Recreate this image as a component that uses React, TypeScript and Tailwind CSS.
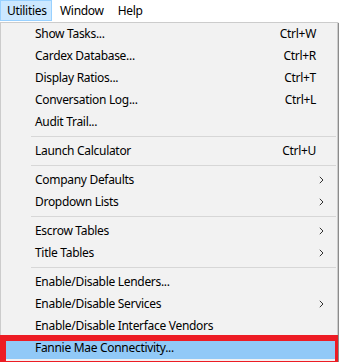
import React from "react";

type Item =
  | { kind: "item"; label: string; shortcut?: string; sub?: boolean; active?: boolean }
  | { kind: "sep" };

const items: Item[] = [
  { kind: "item", label: "Show Tasks...", shortcut: "Ctrl+W" },
  { kind: "item", label: "Cardex Database...", shortcut: "Ctrl+R" },
  { kind: "item", label: "Display Ratios...", shortcut: "Ctrl+T" },
  { kind: "item", label: "Conversation Log...", shortcut: "Ctrl+L" },
  { kind: "item", label: "Audit Trail..." },
  { kind: "sep" },
  { kind: "item", label: "Launch Calculator", shortcut: "Ctrl+U" },
  { kind: "sep" },
  { kind: "item", label: "Company Defaults", sub: true },
  { kind: "item", label: "Dropdown Lists", sub: true },
  { kind: "sep" },
  { kind: "item", label: "Escrow Tables", sub: true },
  { kind: "item", label: "Title Tables", sub: true },
  { kind: "sep" },
  { kind: "item", label: "Enable/Disable Lenders..." },
  { kind: "item", label: "Enable/Disable Services", sub: true },
  { kind: "item", label: "Enable/Disable Interface Vendors" },
  { kind: "item", label: "Fannie Mae Connectivity...", active: true },
];

function Chevron() {
  return (
    <svg width="5" height="8" viewBox="0 0 5 8" className="block">
      <path d="M0.8 0.8 L4 4 L0.8 7.2" fill="none" stroke="#333333" strokeWidth="1" />
    </svg>
  );
}

export default function App() {
  return (
    <div
      className="relative h-[362px] w-[339px] overflow-hidden bg-white text-[12px] tracking-[-0.3px] text-black"
      style={{ fontFamily: '"Noto Sans", "Open Sans", sans-serif' }}
    >
      {/* menu bar */}
      <div className="flex h-[21px] items-stretch">
        <div className="flex w-[52px] items-center border border-[#99d1ff] bg-[#cce8ff] pl-[6px]">Utilities</div>
        <div className="flex items-center pl-[8px] pr-[8px]">Window</div>
        <div className="flex items-center pl-[6px]">Help</div>
      </div>

      {/* dropdown */}
      <div className="mt-px w-[338px] border border-[#cccccc] bg-[#f2f2f2] shadow-[1px_1px_1px_rgba(0,0,0,0.45)]">
        {items.map((it, i) =>
          it.kind === "sep" ? (
            <div key={i} className="flex h-[7px] items-center pl-[30px] pr-[1px]">
              <div className="h-px w-full bg-[#d7d7d7]" />
            </div>
          ) : (
            <div
              key={i}
              className={`flex h-[22px] items-center pl-[34px] pr-[21px] ${it.active ? "bg-[#91c9f7]" : ""}`}
            >
              <span className="flex-1">{it.label}</span>
              {it.shortcut && <span>{it.shortcut}</span>}
              {it.sub && (
                <span className="-mr-[8px]">
                  <Chevron />
                </span>
              )}
            </div>
          )
        )}
        <div className="h-[5px]" />
      </div>

      {/* red annotation box */}
      <div className="absolute left-0 top-[335px] h-[30px] w-[338px] border-b-[4px] border-l-[6px] border-r-[3px] border-t-[6px] border-[#ed1c24]" />
    </div>
  );
}
